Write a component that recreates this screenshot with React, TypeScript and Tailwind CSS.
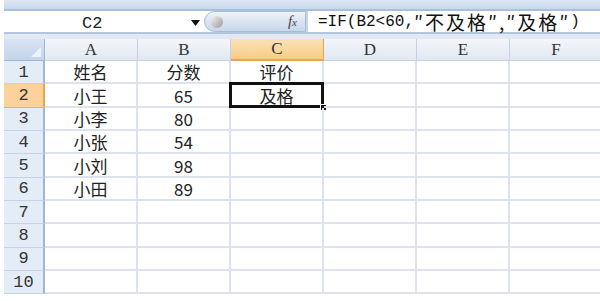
import React from "react";

const cols = ["A", "B", "C", "D", "E", "F"];
const data: Record<number, string[]> = {
  1: ["姓名", "分数", "评价"],
  2: ["小王", "65", "及格"],
  3: ["小李", "80"],
  4: ["小张", "54"],
  5: ["小刘", "98"],
  6: ["小田", "89"],
};

const cjk = { fontFamily: '"Noto Sans CJK SC", "Noto Sans", sans-serif' };
const mono = { fontFamily: '"Liberation Mono", "Noto Sans CJK SC", monospace' };
const serif = { fontFamily: '"Liberation Serif", "DejaVu Serif", serif' };

export default function App() {
  const rows = [1, 2, 3, 4, 5, 6, 7, 8, 9, 10];
  return (
    <div className="w-[600px] h-[301px] bg-white overflow-hidden pl-[4px] flex flex-col">
      {/* top ribbon edge */}
      <div className="h-[11px] bg-gradient-to-b from-[#dbe6f4] to-[#c9d8ec] border-b-2 border-[#a9c0dd]" />
      {/* formula bar */}
      <div className="h-[23px] flex items-stretch bg-white border-b-2 border-[#b3c6de]">
        <div className="w-[200px] flex items-center relative">
          <span className="absolute left-[78px] top-[0px] text-[17px] text-[#222]" style={mono}>C2</span>
          <svg className="absolute left-[187px] top-[9px]" width="9" height="6" viewBox="0 0 9 6">
            <path d="M0 0 L9 0 L4.5 6 Z" fill="#111" />
          </svg>
        </div>
        <div className="w-[102px] flex items-center relative rounded-l-full bg-gradient-to-b from-[#eef3fa] via-[#dae4f1] to-[#c9d7ea] border border-[#a9bcd6]">
          <div className="ml-[6px] w-[12px] h-[12px] rounded-full bg-gradient-to-br from-[#f4f4f4] to-[#9a9a9a]" />
          <span className="ml-auto mr-[8px] italic text-[15px] text-[#444]" style={{ fontFamily: '"Liberation Serif", serif' }}>
            f<span className="text-[11px]">x</span>
          </span>
        </div>
        <div className="w-[2px] bg-[#c7d4e6]" />
        <div className="flex-1 flex items-center pl-[10px] text-[16px] text-[#111] whitespace-nowrap" style={mono}>
          =IF(B2&lt;60,<span style={cjk} className="text-[19px] leading-[21px] tracking-[2px]">″不及格″,″及格″</span>)
        </div>
      </div>
      {/* gap */}
      <div className="h-[5px] bg-[#e3e9f2]" />
      {/* column headers */}
      <div className="h-[22px] flex">
        <div className="w-[41px] shrink-0 relative bg-gradient-to-b from-[#d8e3f2] to-[#c3d4ea] border-r border-b border-[#9fb7d4]">
          <svg className="absolute right-[3px] bottom-[3px]" width="10" height="10" viewBox="0 0 10 10">
            <path d="M10 0 L10 10 L0 10 Z" fill="#eef3fa" />
          </svg>
        </div>
        {cols.map((c) => (
          <div
            key={c}
            className={
              c === "C"
                ? "w-[93px] shrink-0 flex items-center justify-center bg-gradient-to-b from-[#fbe2b4] to-[#f7cd88] border-r border-b-2 border-[#f0a050] text-[17px] text-[#333]"
                : "w-[93px] shrink-0 flex items-center justify-center bg-gradient-to-b from-[#f3f6fb] to-[#e1e8f2] border-r border-b border-[#c2d1e4] text-[17px] text-[#333]"
            }
            style={serif}
          >
            {c}
          </div>
        ))}
      </div>
      {/* rows */}
      {rows.map((r) => (
        <div key={r} className="h-[23.35px] flex">
          <div
            className={
              r === 2
                ? "w-[41px] shrink-0 flex items-center justify-center bg-[#fad29a] border-r-2 border-[#f0a050] border-b border-b-[#f0b068] text-[17px] leading-[21px] text-[#333]"
                : "w-[41px] shrink-0 flex items-center justify-center bg-[#e4ecf7] border-r-2 border-[#9fb7d4] border-b border-b-[#c5d3e6] text-[17px] leading-[21px] text-[#333]"
            }
            style={mono}
          >
            {r}
          </div>
          {cols.map((c, i) => {
            const v = data[r]?.[i] ?? "";
            const sel = r === 2 && c === "C";
            return (
              <div
                key={c}
                className="w-[93px] shrink-0 relative flex items-end justify-center border-r-2 border-b-2 border-[#dce3ee] text-[17px] leading-[20px] text-[#222]"
                style={cjk}
              >
                {v}
                {sel && (
                  <>
                    <div className="absolute left-[-2px] top-[-2px] right-[-2px] bottom-[-2px] border-[3px] border-[#111]" />
                    <div className="absolute right-[-5px] bottom-[-5px] w-[7px] h-[7px] bg-[#111] border border-white" />
                  </>
                )}
              </div>
            );
          })}
        </div>
      ))}
      <div className="flex-1 bg-white" />
    </div>
  );
}
